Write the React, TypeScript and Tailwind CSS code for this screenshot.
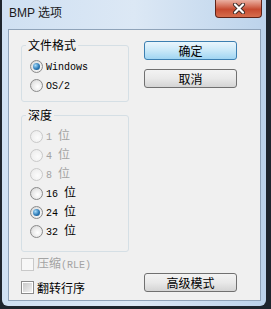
import clsx from 'clsx'

const CJK = "font-['Noto_Sans_CJK_SC','Liberation_Sans',sans-serif]"

function Mixed({ text }: { text: string }) {
  const parts = text.split(/([\x20-\x7e]+)/).filter(Boolean)
  return (
    <>
      {parts.map((part, i) =>
        /^[\x20-\x7e]+$/.test(part) ? (
          <span key={i} className="whitespace-pre font-['Liberation_Mono',monospace] text-[10px]">
            {part}
          </span>
        ) : (
          <span key={i}>{part}</span>
        ),
      )}
    </>
  )
}

function Radio({ checked, disabled }: { checked?: boolean; disabled?: boolean }) {
  return (
    <span
      className={clsx(
        'flex h-[13px] w-[13px] shrink-0 items-center justify-center rounded-full border',
        disabled
          ? 'border-[#c9c9c9] bg-[radial-gradient(circle_at_60%_60%,#fbfbfb,#f0f0f0_60%,#e4e4e4)]'
          : 'border-[#8b8b8b] bg-[radial-gradient(circle_at_60%_60%,#ffffff,#e8e8e8_55%,#c9c9c9)]',
      )}
    >
      {checked ? (
        <span className="h-[7px] w-[7px] rounded-full bg-[radial-gradient(circle_at_35%_35%,#a6dcfb,#2d7ab6_55%,#134a78)]" />
      ) : null}
    </span>
  )
}

function RadioRow({ label, checked, disabled }: { label: string; checked?: boolean; disabled?: boolean }) {
  return (
    <div className="flex h-[19px] items-center">
      <Radio checked={checked} disabled={disabled} />
      <span className={clsx('ml-[3px] text-[12px] leading-[16px]', disabled ? 'text-[#a3a3a3]' : 'text-black')}>
        <Mixed text={label} />
      </span>
    </div>
  )
}

function CheckRow({ label, disabled }: { label: string; disabled?: boolean }) {
  return (
    <div className="flex h-[19px] items-center">
      <span
        className={clsx(
          'flex h-[13px] w-[13px] shrink-0 items-center justify-center border',
          disabled ? 'border-[#c9c9c9] bg-[#f7f7f7]' : 'border-[#8b8b8b] bg-white',
        )}
      >
        {disabled ? null : <span className="h-[9px] w-[9px] bg-linear-to-br from-[#c9c9c9] to-[#f2f2f2]" />}
      </span>
      <span className={clsx('ml-[3px] text-[12px] leading-[16px]', disabled ? 'text-[#a3a3a3]' : 'text-black')}>
        <Mixed text={label} />
      </span>
    </div>
  )
}

function GroupBox({ title, className, children }: { title: string; className: string; children: React.ReactNode }) {
  return (
    <div className={clsx('relative w-[108px] rounded-[3px] border border-[#d5dfe5] pl-[8px] pt-[11px]', className)}>
      <span className="absolute -top-[9px] left-[4px] bg-[#f0f0f0] px-[2px] text-[12px] leading-[16px] text-black">{title}</span>
      {children}
    </div>
  )
}

function DialogButton({ label, primary }: { label: string; primary?: boolean }) {
  return (
    <button
      type="button"
      className={clsx(
        'flex h-[19px] w-[93px] items-center justify-center rounded-[3px] border text-[12px] leading-[16px] text-black',
        primary
          ? 'border-[#3c7fb1] bg-linear-to-b from-[#eaf6fd] via-[#c9e8f8] via-50% to-[#a0d5f2]'
          : 'border-[#707070] bg-linear-to-b from-[#f3f3f3] via-[#e9e9e9] via-50% to-[#d4d4d4]',
      )}
    >
      {label}
    </button>
  )
}

export default function App() {
  return (
    <div className={clsx('h-[309px] w-[271px] overflow-hidden bg-[#1e252d] pl-[2px]', CJK)}>
      <div className="flex h-[306px] w-[264px] flex-col rounded-b-[6px] bg-linear-to-r from-[#cfe0f2] via-[#dce8f5] to-[#bcd3eb] pb-[5px] pl-[6px] pr-[5px]">
        <div className="-ml-[6px] -mr-[5px] flex h-[29px] items-start justify-between pl-[7px] pr-[4px]">
          <span className="mt-[5px] font-['Liberation_Sans','Noto_Sans_CJK_SC',sans-serif] text-[12px] leading-[16px] text-[#1a1a1a]">
            BMP 选项
          </span>
          <div className="flex h-[18px] w-[47px] items-center justify-center rounded-b-[4px] border border-t-0 border-[#5e2318] bg-linear-to-b from-[#eab0a2] via-[#c64a30] via-55% to-[#d66d4d]">
            <svg width="14" height="11" viewBox="0 0 14 11">
              <path d="M3 1.5 L11 9.5 M11 1.5 L3 9.5" stroke="#3b2a27" strokeWidth="4" strokeLinecap="round" />
              <path d="M3 1.5 L11 9.5 M11 1.5 L3 9.5" stroke="#ffffff" strokeWidth="2.2" strokeLinecap="round" />
            </svg>
          </div>
        </div>

        <div className="flex flex-1 border border-[#8fa3b9] bg-[#f0f0f0]">
          <div className="flex flex-col pl-[12px]">
            <GroupBox title="文件格式" className="mt-[15px] h-[57px]">
              <RadioRow label="Windows" checked />
              <RadioRow label="OS/2" />
            </GroupBox>
            <GroupBox title="深度" className="mt-[13px] h-[137px]">
              <RadioRow label="1 位" disabled />
              <RadioRow label="4 位" disabled />
              <RadioRow label="8 位" disabled />
              <RadioRow label="16 位" />
              <RadioRow label="24 位" checked />
              <RadioRow label="32 位" />
            </GroupBox>
            <div className="mt-[3px]">
              <CheckRow label="压缩(RLE)" disabled />
            </div>
            <div className="mt-[4px]">
              <CheckRow label="翻转行序" />
            </div>
          </div>

          <div className="ml-[15px] flex flex-col pb-[8px] pt-[11px]">
            <DialogButton label="确定" primary />
            <div className="mt-[9px]">
              <DialogButton label="取消" />
            </div>
            <div className="mt-auto">
              <DialogButton label="高级模式" />
            </div>
          </div>
        </div>
      </div>
    </div>
  )
}
